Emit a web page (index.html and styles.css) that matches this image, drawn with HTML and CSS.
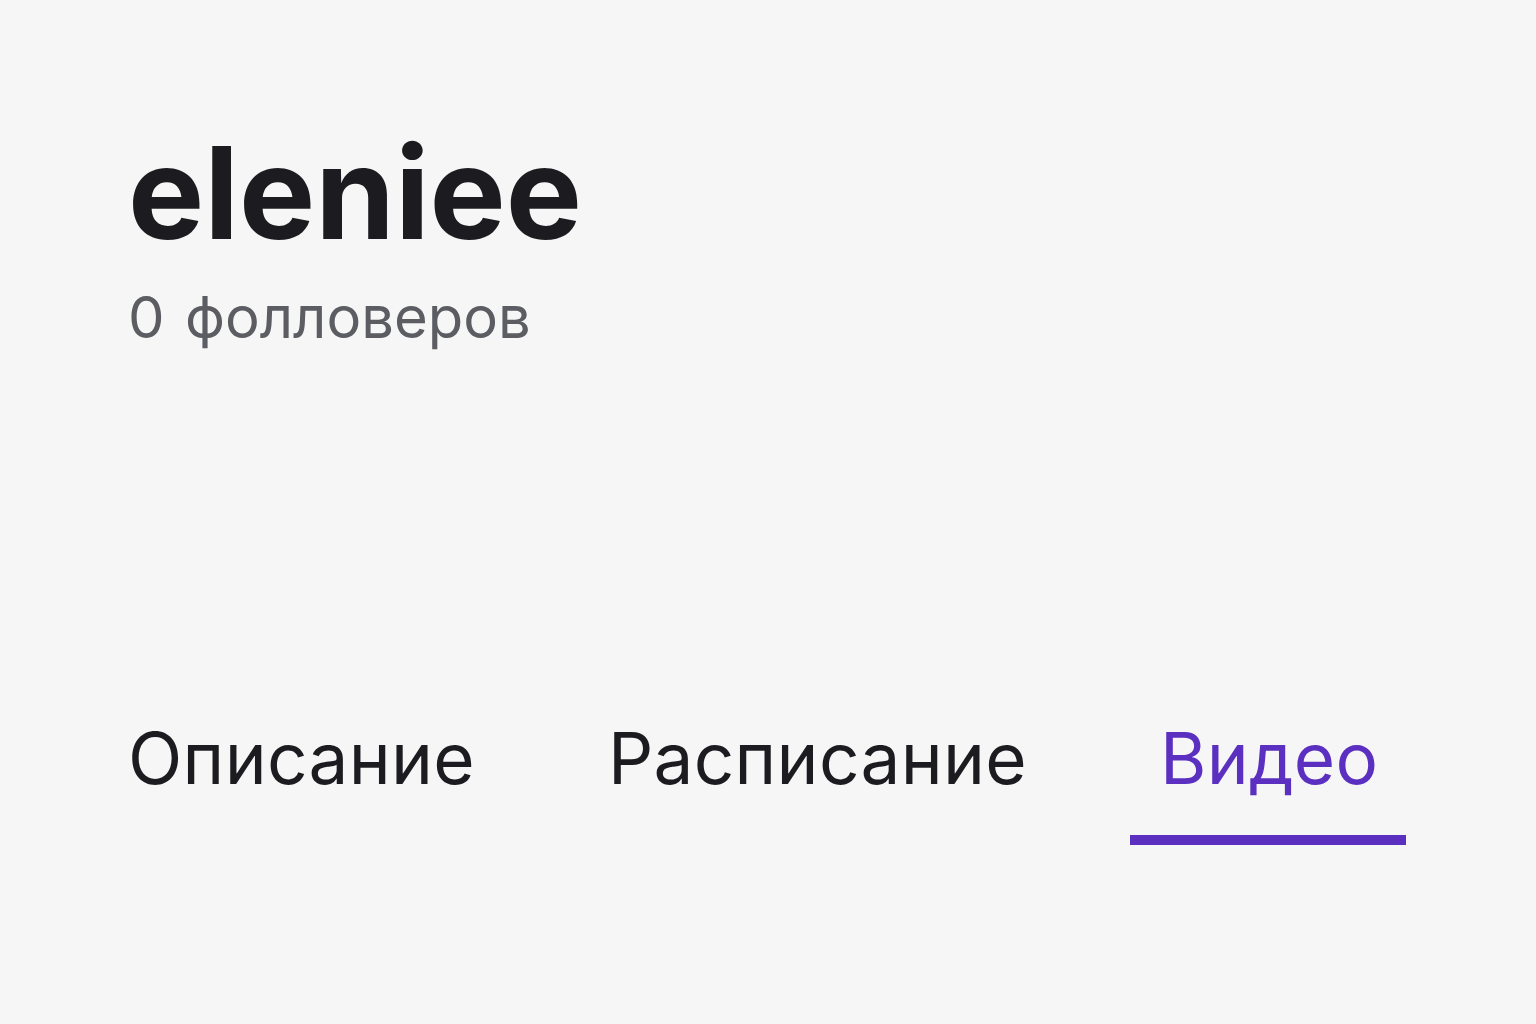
FILE: index.html
```html
<!DOCTYPE html>
<html lang="ru">
<head>
    <meta charset="UTF-8">
    <title>eleniee</title>
    <link rel="stylesheet" href="styles.css">
</head>
<body>
<div class="channel">
    <div class="channel-head">
        <h1 class="channel-name">eleniee</h1>
        <span class="channel-followers">0 фолловеров</span>
    </div>
    <nav class="tabs">
        <a class="tab">Описание</a>
        <a class="tab">Расписание</a>
        <a class="tab active">Видео</a>
    </nav>
</div>
</body>
</html>
```

FILE: styles.css
```css
*, :after, :before {
    box-sizing: border-box;
}
body {
    margin: 0;
    min-height: 1024px;
    background: #f6f6f6;
    font-family: Inter, "Noto Sans", sans-serif;
    color: #1c1c20;
}
h1 {
    margin: 0;
}
.channel {
    padding: 129px 0 0 128px;
}
.channel-head {
    display: flex;
    flex-direction: column;
}
.channel-name {
    font-size: 128px;
    font-weight: 700;
    line-height: 1;
}
.channel-followers {
    margin-top: 31px;
    font-size: 58px;
    line-height: 1;
    word-spacing: 4px;
    color: #5b5d63;
}
.tabs {
    display: flex;
    gap: 75px;
    margin: 377px 0 0 -30px;
}
.tab {
    padding: 0 28px 41px 30px;
    font-size: 71px;
    line-height: 1;
    letter-spacing: 0.3px;
    border-bottom: 10px solid transparent;
}
.tab.active {
    color: #5b2fc0;
    border-bottom-color: #5b2fc0;
}
```
